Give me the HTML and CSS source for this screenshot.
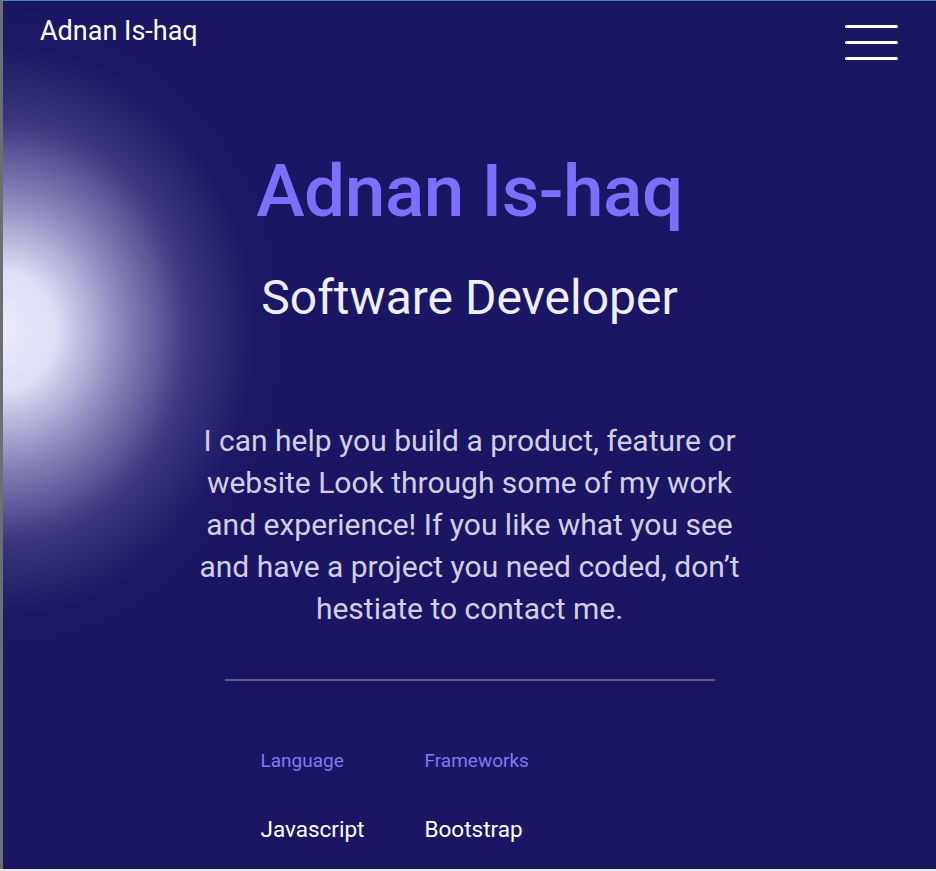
FILE: index.html
```html
<!DOCTYPE html>
<html lang="en">
<head>
<meta charset="utf-8">
<title>Adnan Is-haq</title>
<link rel="stylesheet" href="styles.css">
</head>
<body>
<div class="frame">
  <div class="glow"></div>
  <header class="nav">
    <a class="brand" href="#">Adnan Is-haq</a>
    <button class="burger" aria-label="Menu">
      <span></span><span></span><span></span>
    </button>
  </header>
  <main class="hero">
    <h1 class="title">Adnan Is-haq</h1>
    <h2 class="subtitle">Software Developer</h2>
    <p class="intro">I can help you build a product, feature or website Look through some of my work and experience! If you like what you see and have a project you need coded, don’t hestiate to contact me.</p>
    <hr class="divider">
    <section class="skills">
      <div class="skill">
        <div class="label">Language</div>
        <div class="value">Javascript</div>
      </div>
      <div class="skill">
        <div class="label">Frameworks</div>
        <div class="value">Bootstrap</div>
      </div>
    </section>
  </main>
</div>
</body>
</html>
```
FILE: styles.css
```css
* { box-sizing: border-box; }
html, body { margin: 0; padding: 0; }
body {
  background: #f0f0f0;
  font-family: Roboto, "Liberation Sans", sans-serif;
}
.frame {
  position: relative;
  height: 869px;
  background: #1b1663;
  border-top: 1px solid #4a82c0;
  border-left: 3px solid #6e6e6e;
  overflow: hidden;
}
.glow {
  position: absolute;
  left: 0;
  top: 10px;
  width: 280px;
  height: 657px;
  background: radial-gradient(ellipse 295px 330px at 0 320px,
    rgba(236,236,252,1) 0%,
    rgba(228,228,249,0.97) 18%,
    rgba(172,170,216,0.76) 40%,
    rgba(100,96,166,0.42) 64%,
    rgba(45,40,115,0.15) 86%,
    rgba(27,22,99,0) 100%);
}
.nav {
  position: relative;
  display: flex;
  justify-content: space-between;
  align-items: flex-start;
  padding: 14px 38px 0 37px;
}
.brand {
  color: #ffffff;
  text-decoration: none;
  font-size: 27px;
  line-height: 32px;
}
.burger {
  background: none;
  border: 0;
  padding: 10px 0 0;
  display: flex;
  flex-direction: column;
  gap: 13px;
  cursor: pointer;
}
.burger span {
  display: block;
  width: 53px;
  height: 3px;
  border-radius: 2px;
  background: #ffffff;
}
.hero {
  position: relative;
  display: flex;
  flex-direction: column;
  align-items: center;
  text-align: center;
}
.title {
  margin: 88px 0 0;
  font-size: 73px;
  font-weight: 500;
  line-height: 86px;
  color: #7b70fb;
  letter-spacing: -0.5px;
}
.subtitle {
  margin: 36px 0 0;
  font-size: 48px;
  font-weight: 400;
  line-height: 56px;
  color: #eeeefd;
}
.intro {
  margin: 94px 0 0;
  width: 570px;
  font-size: 30px;
  line-height: 42px;
  color: #d2cee4;
}
.divider {
  margin: 49px 0 0;
  width: 490px;
  border: 0;
  border-top: 2px solid #5e5a78;
}
.skills {
  display: flex;
  width: 490px;
  padding: 68px 36px 0;
  text-align: left;
}
.skill {
  width: 164px;
  display: flex;
  flex-direction: column;
  gap: 44px;
}
.label {
  font-size: 19px;
  line-height: 24px;
  color: #7f79f2;
}
.value {
  font-size: 22.5px;
  line-height: 24px;
  color: #ffffff;
}
```
